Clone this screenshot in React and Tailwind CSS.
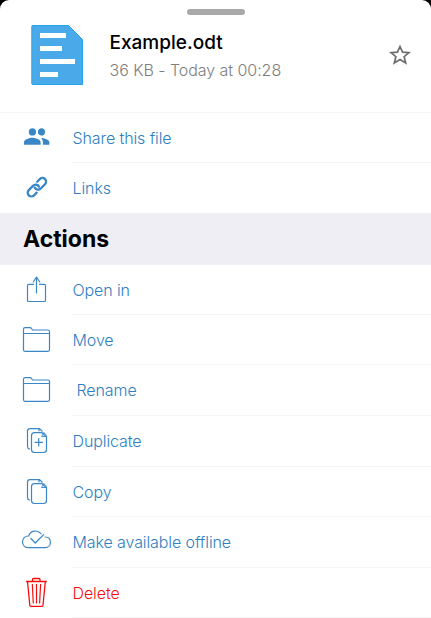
import React from "react";

const line = {
  fill: "none",
  stroke: "currentColor",
  strokeWidth: 1.2,
  strokeLinejoin: "round",
  strokeLinecap: "round",
};

function People() {
  return (
    <g fill="currentColor">
      <circle cx="32.4" cy="18.9" r="3.6" />
      <path d="M41.4 15.3a3.6 3.6 0 1 1 0 7.2c-1.900 0-3.500-1.600-3.500-3.600s1.600-3.600 3.500-3.600z" />
      <path d="M24 31.700v-2.400c0-3 5.500-4.500 8.400-4.500s8.200 1.500 8.200 4.500v2.400z" />
      <path d="M41.100 24.900c3 .1 8.300 1.500 8.300 4.400v2.400h-6.500v-2.400c0-1.800-.7-3.300-1.800-4.400z" />
    </g>
  );
}

function Chain() {
  return (
    <g
      transform="translate(36.900 24.200) rotate(-45)"
      fill="none"
      stroke="currentColor"
      strokeWidth="2.300"
      strokeLinecap="round"
    >
      <path d="M-4 3.700H-7.800A3.700 3.700 0 0 1-7.800-3.700H-1.800A3.700 3.700 0 0 1 1.800 1.200" />
      <path d="M4-3.700H7.800A3.700 3.700 0 0 1 7.800 3.700H1.800A3.700 3.700 0 0 1-1.800-1.200" />
    </g>
  );
}

function OpenIn() {
  return (
    <g {...line}>
      <path d="M33.500 19.300H28.800q-1.300 0-1.300 1.300V35.200q0 1.300 1.300 1.300H44.200q1.300 0 1.300-1.300V20.600q0-1.300-1.300-1.300H39.500" />
      <path d="M36.500 28V12.500M33.200 17L36.500 12L39.800 17" />
    </g>
  );
}

function Folder() {
  return (
    <g {...line}>
      <path d="M23.500 18.500V14.200q0-1.500 1.500-1.500H30q1 0 1.500.8L32.500 15H48q1.500 0 1.500 1.500V34.800q0 1.500-1.500 1.500H25q-1.500 0-1.500-1.500V18.500H49.500" />
    </g>
  );
}

function Pages({ plus }) {
  return (
    <g {...line}>
      <path d="M29.500 33Q27.500 32.500 27.500 30.500V15Q27.500 12.600 30 12.600H39.500L42.200 15.200M39 12.800V14.800" />
      <path d="M34.500 16.700H42L46.500 20.800V33.500q0 3-3 3h-9q-3 0-3-3V19.700q0-3 3-3z" />
      <path d="M43.800 16.700L41.500 20.500H46.500Q46.300 18 43.800 16.700" strokeWidth="0.9" />
      {plus && <path d="M35 26.300H42.500M38.700 22.500V30" />}
    </g>
  );
}

function CloudCheck() {
  return (
    <g {...line}>
      <path d="M41 16.700C37.500 12.600 30.300 13 28.700 19C25 18.900 22.500 21.500 22.500 24.800C22.500 28.200 25 30.700 28.500 30.700H45C48.300 30.700 50.400 28.400 50.400 25.500C50.400 22.200 48.300 20.100 45.300 20" />
      <path d="M30.900 21.500L35.300 26L43.600 17.600" />
    </g>
  );
}

function Trash() {
  return (
    <g {...line} strokeLinecap="butt">
      <path d="M26 13.500H46.800M32.500 13.300V11.700q0-1.200 1-1.200H39q1 0 1 1.200V13.300" strokeWidth="1.300" />
      <path d="M27.500 13.500L29.800 37.300q.1 1 1 1H42q.9 0 1-1L45.300 13.500" strokeWidth="1.300" />
      <path d="M32.300 16L33.300 35.500M36.500 16V35.500M40.600 16L39.600 35.500" />
    </g>
  );
}

function Row({ icon, label, height = "h-[50px]", color = "text-[#2e7fc1]", iconColor = "text-[#3a87c8]", inset = "pl-[0.500px]", divider = "border-b border-[#f4f4f5]" }) {
  return (
    <li className={`flex shrink-0 ${height} ${color}`}>
      <svg className={`h-[50px] w-[72px] shrink-0 ${iconColor}`} viewBox="0 0 72 50">
        {icon}
      </svg>
      <div className={`flex flex-1 items-center whitespace-nowrap text-base font-[340] tracking-[-0.100px] ${divider} ${inset}`}>
        {label}
      </div>
    </li>
  );
}

export default function App() {
  return (
    <div className="h-[618px] w-[431px] overflow-hidden bg-black font-['Inter',sans-serif]">
      <main className="flex h-full flex-col overflow-hidden rounded-t-[9px] bg-white">
        <header className="flex h-[113px] shrink-0 flex-col border-b border-[#f3f3f8]">
          <div className="mt-[9px] h-[6px] w-[58px] shrink-0 self-center rounded-full bg-[#a9a9a9]" />
          <div className="flex">
            <svg className="mt-[10px] ml-[31px] h-[61px] w-[53px]" viewBox="0 0 53 61">
              <path d="M1.500.5H37.500L51.500 14.500V59.500H1.500q-.7 0-.7-.7V1.200q0-.7.7-.7z" fill="#49a9e9" stroke="#22a5ee" />
              <path d="M9 8H35V13H9zM9 21H31V26H9zM9 34H44V39H9zM9 47H27V52H9z" fill="white" />
            </svg>
            <div className="ml-[25.500px] flex flex-1 flex-col pt-[14px] whitespace-nowrap">
              <h1 className="text-[19px] leading-7 font-medium tracking-[0px] text-black">Example.odt</h1>
              <p className="text-base leading-[27px] font-[340] tracking-[-0.050px] text-[#7e7e7e]">36 KB - Today at 00:28</p>
            </div>
            <svg className="mt-[28px] mr-[19px] h-6 w-6" viewBox="0 0 24 24" fill="none" stroke="#6d6d6d" strokeWidth="1.700">
              <path d="M12 3.600L14.600 9.100L20.900 9.600L16.100 13.700L17.700 20L12 16.600L6.300 20L7.900 13.700L3.100 9.600L9.400 9.100z" />
            </svg>
          </div>
        </header>
        <ul className="flex flex-col">
          <Row icon={<People />} label="Share this file" />
          <Row icon={<Chain />} label="Links" divider="" />
        </ul>
        <h2 className="flex h-[52px] shrink-0 items-center bg-[#efeef5] pl-[23px] text-[23px] font-bold text-black">
          Actions
        </h2>
        <ul className="flex flex-col">
          <Row icon={<OpenIn />} label="Open in" />
          <Row icon={<Folder />} label="Move" />
          <Row icon={<Folder />} label="Rename" height="h-[51px]" inset="pl-[4.500px]" />
          <Row icon={<Pages plus />} label="Duplicate" height="h-[51px]" />
          <Row icon={<Pages />} label="Copy" />
          <Row icon={<CloudCheck />} label="Make available offline" height="h-[51px]" />
          <Row icon={<Trash />} label="Delete" color="text-[#f80d0d]" iconColor="text-[#f80d0d]" />
        </ul>
      </main>
    </div>
  );
}
